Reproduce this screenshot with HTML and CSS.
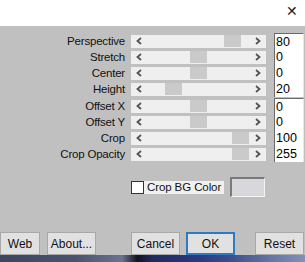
FILE: index.html
```html
<!DOCTYPE html>
<html lang="en">
<head>
  <meta charset="UTF-8">
  <title>Perspective</title>
  <link rel="stylesheet" href="styles.css">
</head>
<body>
  <div class="titlebar">
    <span class="close">&#x2715;</span>
  </div>

  <div class="panel">
    <div class="sliders">
      <div class="group">
        <div class="row">
          <span class="label">Perspective</span>
          <div class="scroll">
            <span class="arrow"><svg width="6" height="8" viewBox="0 0 6 8"><polyline points="5,1 1.5,4 5,7" /></svg></span>
            <div class="track"><span class="thumb" style="margin-left:77px"></span></div>
            <span class="arrow"><svg width="6" height="8" viewBox="0 0 6 8"><polyline points="1,1 4.5,4 1,7" /></svg></span>
          </div>
          <span class="edit first">80</span>
        </div>
        <div class="row">
          <span class="label">Stretch</span>
          <div class="scroll">
            <span class="arrow"><svg width="6" height="8" viewBox="0 0 6 8"><polyline points="5,1 1.5,4 5,7" /></svg></span>
            <div class="track"><span class="thumb" style="margin-left:43px"></span></div>
            <span class="arrow"><svg width="6" height="8" viewBox="0 0 6 8"><polyline points="1,1 4.5,4 1,7" /></svg></span>
          </div>
          <span class="edit">0</span>
        </div>
        <div class="row">
          <span class="label">Center</span>
          <div class="scroll">
            <span class="arrow"><svg width="6" height="8" viewBox="0 0 6 8"><polyline points="5,1 1.5,4 5,7" /></svg></span>
            <div class="track"><span class="thumb" style="margin-left:43px"></span></div>
            <span class="arrow"><svg width="6" height="8" viewBox="0 0 6 8"><polyline points="1,1 4.5,4 1,7" /></svg></span>
          </div>
          <span class="edit">0</span>
        </div>
        <div class="row">
          <span class="label">Height</span>
          <div class="scroll">
            <span class="arrow"><svg width="6" height="8" viewBox="0 0 6 8"><polyline points="5,1 1.5,4 5,7" /></svg></span>
            <div class="track"><span class="thumb" style="margin-left:18px"></span></div>
            <span class="arrow"><svg width="6" height="8" viewBox="0 0 6 8"><polyline points="1,1 4.5,4 1,7" /></svg></span>
          </div>
          <span class="edit">20</span>
        </div>
      </div>

      <div class="group">
        <div class="row">
          <span class="label">Offset X</span>
          <div class="scroll">
            <span class="arrow"><svg width="6" height="8" viewBox="0 0 6 8"><polyline points="5,1 1.5,4 5,7" /></svg></span>
            <div class="track"><span class="thumb" style="margin-left:43px"></span></div>
            <span class="arrow"><svg width="6" height="8" viewBox="0 0 6 8"><polyline points="1,1 4.5,4 1,7" /></svg></span>
          </div>
          <span class="edit first">0</span>
        </div>
        <div class="row">
          <span class="label">Offset Y</span>
          <div class="scroll">
            <span class="arrow"><svg width="6" height="8" viewBox="0 0 6 8"><polyline points="5,1 1.5,4 5,7" /></svg></span>
            <div class="track"><span class="thumb" style="margin-left:43px"></span></div>
            <span class="arrow"><svg width="6" height="8" viewBox="0 0 6 8"><polyline points="1,1 4.5,4 1,7" /></svg></span>
          </div>
          <span class="edit">0</span>
        </div>
        <div class="row">
          <span class="label">Crop</span>
          <div class="scroll">
            <span class="arrow"><svg width="6" height="8" viewBox="0 0 6 8"><polyline points="5,1 1.5,4 5,7" /></svg></span>
            <div class="track"><span class="thumb" style="margin-left:85px"></span></div>
            <span class="arrow"><svg width="6" height="8" viewBox="0 0 6 8"><polyline points="1,1 4.5,4 1,7" /></svg></span>
          </div>
          <span class="edit">100</span>
        </div>
        <div class="row">
          <span class="label">Crop Opacity</span>
          <div class="scroll">
            <span class="arrow"><svg width="6" height="8" viewBox="0 0 6 8"><polyline points="5,1 1.5,4 5,7" /></svg></span>
            <div class="track"><span class="thumb" style="margin-left:85px"></span></div>
            <span class="arrow"><svg width="6" height="8" viewBox="0 0 6 8"><polyline points="1,1 4.5,4 1,7" /></svg></span>
          </div>
          <span class="edit">255</span>
        </div>
      </div>
    </div>

    <div class="options">
      <label class="check">
        <span class="box"></span>
        <span class="check-text">Crop BG Color</span>
      </label>
      <span class="swatch"></span>
    </div>

    <div class="buttons">
      <button class="btn web">Web</button>
      <button class="btn about">About...</button>
      <button class="btn cancel">Cancel</button>
      <button class="btn ok">OK</button>
      <button class="btn reset">Reset</button>
    </div>
  </div>

  <div class="desktop"></div>
</body>
</html>
```

FILE: styles.css
```css
body {
  margin: 0;
  width: 305px;
  height: 262px;
  overflow: hidden;
  font-family: "Liberation Sans", Arial, sans-serif;
  font-size: 12px;
  color: #111;
  background: #c0c0c0;
}

.titlebar {
  height: 26px;
  background: #ffffff;
  display: flex;
  justify-content: flex-end;
  align-items: center;
}

.close {
  font-size: 14px;
  color: #222;
  margin-right: 7px;
  margin-top: -4px;
}

.panel {
  height: 229px;
  background: #c0c0c0;
  display: flex;
  flex-direction: column;
}

.sliders {
  padding-top: 7px;
  display: flex;
  flex-direction: column;
  gap: 1px;
}

.row {
  display: flex;
  align-items: center;
  height: 16px;
}

.label {
  width: 125px;
  text-align: right;
  font-size: 11.5px;
  letter-spacing: -0.2px;
  color: #111;
}

.scroll {
  margin-left: 6px;
  width: 135px;
  height: 13px;
  background: #efefef;
  display: flex;
  align-items: center;
}

.arrow {
  width: 16px;
  display: flex;
  justify-content: center;
}

.arrow svg polyline {
  fill: none;
  stroke: #555;
  stroke-width: 1.8;
}

.track {
  flex: 1;
  height: 13px;
  display: flex;
}

.thumb {
  width: 17px;
  height: 12px;
  background: #cacaca;
}

.edit {
  margin-left: 8px;
  width: 27px;
  height: 16px;
  line-height: 16px;
  padding-left: 1px;
  background: #ffffff;
  border-left: 1px solid #6b6b6b;
  border-right: 1px solid #e8e8e8;
  font-size: 12.5px;
  color: #000;
}

.edit.first {
  height: 15px;
  line-height: 16px;
  border-top: 1px solid #6b6b6b;
}

.options {
  display: flex;
  align-items: center;
  margin-top: 15px;
  padding-left: 131px;
}

.check {
  display: flex;
  align-items: center;
  background: #f0f0f0;
  height: 13px;
  width: 93px;
  white-space: nowrap;
}

.box {
  flex: none;
  width: 11px;
  height: 11px;
  border: 1px solid #333;
  background: #ffffff;
}

.check-text {
  margin-left: 3px;
  font-size: 11.5px;
  letter-spacing: -0.1px;
  color: #111;
}

.swatch {
  margin-left: 6px;
  width: 32px;
  height: 17px;
  background: #d8d8dc;
  border-top: 2px solid #7a7a7a;
  border-left: 2px solid #7a7a7a;
  border-right: 1px solid #f4f4f4;
  border-bottom: 1px solid #f4f4f4;
}

.buttons {
  margin-top: auto;
  display: flex;
  height: 23px;
}

.btn {
  font-family: "Liberation Sans", Arial, sans-serif;
  font-size: 12px;
  color: #111;
  background: #e1e1e1;
  border: 1px solid #a8a8a8;
  height: 23px;
  width: 49px;
  padding: 0;
}

.web {
  width: 40px;
}

.about {
  margin-left: 7px;
}

.cancel {
  margin-left: 35px;
}

.ok {
  margin-left: 6px;
  border: 2px solid #2c79c4;
}

.reset {
  margin-left: 20px;
}

.desktop {
  height: 7px;
  background: linear-gradient(90deg, #3c4560 0%, #4a5370 25%, #6a7290 40%, #121420 45%, #1e2a60 50%, #2b3a80 65%, #3c4c8a 75%, #6878a8 90%, #8090b8 100%);
}
```
